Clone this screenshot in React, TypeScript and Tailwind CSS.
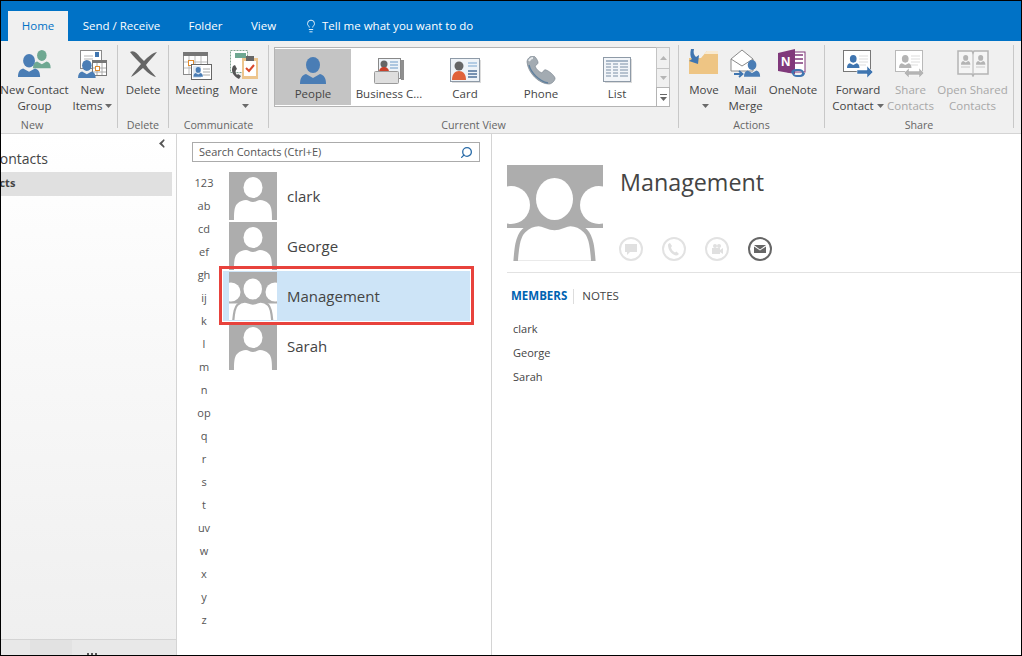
import React from "react";
import { Lightbulb, Search } from "lucide-react";

const Caret = ({ c = "#6a6a6a" }: { c?: string }) => (
  <svg width="7" height="4" viewBox="0 0 7 4" className="inline-block ml-[3px] mb-[2px]"><path d="M0 0h7L3.5 4z" fill={c} /></svg>
);

const Person = ({ c = "#4a7db5", x = 0, y = 0, s = 1 }: { c?: string; x?: number; y?: number; s?: number }) => (
  <g transform={`translate(${x} ${y}) scale(${s})`} fill={c}>
    <ellipse cx="13" cy="8" rx="7" ry="8" />
    <path d="M0 27c0-6 2-9 6-10l7 4 7-4c4 1 6 4 6 10z" />
  </g>
);

const Box = ({ w, h, children }: { w: number; h: number; children: React.ReactNode }) => (
  <svg width={w} height={h} viewBox={`0 0 ${w} ${h}`} className="block">{children}</svg>
);

const IconGroup = () => (
  <Box w={33} h={27}>
    <Person c="#6fa892" x={15} y={0} s={0.68} />
    <Person c="#4a7db5" x={0} y={4} s={0.85} />
  </Box>
);
const IconNewItems = () => (
  <Box w={30} h={29}>
    <rect x="2.5" y="1.5" width="21" height="18" fill="#fff" stroke="#8a8a8a" />
    <rect x="17" y="3" width="4" height="5" fill="#3f75b0" />
    <path d="M6 7h9M6 10h9" stroke="#b5b5b5" />
    <rect x="14.5" y="12.5" width="14" height="14" fill="#fff" stroke="#777" />
    <rect x="14" y="11" width="15" height="3" fill="#777" />
    <path d="M19 14v12M24 14v12M15 19h13M15 23h13" stroke="#aaa" />
    <rect x="17.5" y="17.5" width="4" height="4" fill="#fff" stroke="#e08a2c" />
    <Person x={0} y={11} s={0.68} />
  </Box>
);
const IconX = () => (
  <Box w={30} h={27}>
    <path d="M2 2c4-2 7 1 10 5l4 4c4-4 8-8 13-9-3 4-8 9-11 13 2 4 7 8 10 12-5-1-10-6-13-9-4 3-8 7-12 9 2-4 6-8 10-13C9 10 5 6 2 2z" fill="#666" />
  </Box>
);
const IconMeeting = () => (
  <Box w={30} h={29}>
    <rect x="1.5" y="1.5" width="24" height="22" fill="#fff" stroke="#8a8a8a" />
    <rect x="1" y="1" width="25" height="4" fill="#777" />
    <path d="M7 5v18M13 5v18M19 5v18M2 11h23M2 17h23" stroke="#bbb" />
    <rect x="6.5" y="9.5" width="5" height="5" fill="#fff" stroke="#e08a2c" />
    <rect x="9.5" y="13.5" width="20" height="15" fill="#fff" stroke="#666" />
    <rect x="11" y="15" width="8" height="12" fill="#dfe8f2" />
    <Person x={11.5} y={16} s={0.36} />
    <path d="M21 18h7M21 21h7M21 24h7" stroke="#aaa" />
  </Box>
);
const IconMore = () => (
  <Box w={30} h={31}>
    <rect x="1.5" y="1.5" width="17" height="22" fill="#fff" stroke="#7fa591" strokeDasharray="2 1" />
    <rect x="6" y="4" width="11" height="5" fill="#6fa892" />
    <rect x="13" y="9" width="16" height="21" fill="#edc58d" />
    <rect x="15" y="12" width="12" height="15" fill="#fff" />
    <rect x="17" y="7" width="8" height="5" fill="#666" />
    <path d="M17 19l3 3 5-6" stroke="#d9482b" strokeWidth="2" fill="none" />
    <path d="M4 17c-3 5 1 11 6 13l2-3-3-2-1 1c-1-1-2-3-1-5l1-1-2-4z" fill="#555" />
  </Box>
);
const IconPeople = () => (
  <Box w={26} h={27}><Person /></Box>
);
const IconBizCard = () => (
  <Box w={31} h={28}>
    <rect x="27" y="3" width="3" height="20" fill="#8f8f8f" />
    <rect x="4.500" y="1.500" width="22" height="20" fill="#eef3f8" stroke="#888" />
    <circle cx="10" cy="7" r="3.5" fill="#666" />
    <path d="M5 15c0-3 2-5 5-5s5 2 5 5z" fill="#c9412b" />
    <path d="M16 5h8M16 8h8M16 11h8" stroke="#6d9ac8" />
    <rect x=".5" y="14.500" width="24" height="12" rx="1" fill="#dedede" stroke="#9a9a9a" />
  </Box>
);
const IconCard = () => (
  <Box w={31} h={25}>
    <rect x="2" y="2" width="29" height="23" fill="#dcdcdc" />
    <rect x=".5" y=".5" width="29" height="23" fill="#eef3f8" stroke="#8e9aa7" />
    <circle cx="9" cy="8" r="4.500" fill="#666" />
    <path d="M2 22c0-6 3-9 7-9s7 3 7 9z" fill="#e0623a" />
    <path d="M18 5h9M18 8h9" stroke="#79a5d0" />
    <path d="M18 13h9M18 16h9M18 19h9" stroke="#4f7299" strokeWidth="1.4" />
  </Box>
);
const IconPhone = () => (
  <Box w={30} h={29}>
    <path d="M1 6c0-3 3-6 6-6 2 0 4 3 5 6 .5 2-2 3-3 4 1 3 4 6 7 7 1-1 2-4 4-3 3 1 8 5 9 8 .5 2-3 6-6 6C13 28 2 17 1 6z" fill="#a3abb2" stroke="#7d8791" strokeWidth=".7" />
    <path d="M3 5c1-2 2-3 4-3" stroke="#e4e8eb" strokeWidth="2" fill="none" />
    <path d="M3 9c2 8 10 16 19 18" stroke="#5e7f9e" strokeWidth="1.3" fill="none" />
  </Box>
);
const IconList = () => (
  <Box w={29} h={26}>
    <rect x="2" y="2" width="27" height="24" fill="#dcdcdc" />
    <rect x=".5" y=".5" width="27" height="24" fill="#f2f5f9" stroke="#8e9aa7" />
    <path d="M3 4h22" stroke="#5d7896" />
    {[7, 10, 13, 16, 19].map((y) => (
      <path key={y} d="M3 0h5M10 0h5M17 0h8" transform={`translate(0 ${y})`} stroke="#7a8fa6" />
    ))}
  </Box>
);
const IconMove = () => (
  <Box w={30} h={26}>
    <path d="M0 9h12l6-7h11v23H0z" fill="#eec584" />
    <path d="M18 2h11v3H15z" fill="#f8ead2" />
    <path d="M2 0h3c-1 4 0 6 2 8l3-2-1 9-9-3 3-2C1 8 1 4 2 0z" fill="#3f75b0" />
  </Box>
);
const IconMail = () => (
  <Box w={31} h={30}>
    <path d="M1 10L12 1l11 9v12H1z" fill="#fff" stroke="#8a8a8a" />
    <path d="M1 10l11 7 11-7" fill="none" stroke="#8a8a8a" />
    <Person x={14} y={11} s={0.62} />
    <path d="M4 25h8M9 22l3.500 3-3.500 3" stroke="#3f75b0" strokeWidth="1.800" fill="none" />
  </Box>
);
const IconOneNote = () => (
  <Box w={31} h={30}>
    <rect x="10" y="3" width="17" height="20" fill="#fff" stroke="#80397b" />
    <path d="M17 6h8M17 10h8M17 14h8" stroke="#80397b" strokeWidth="1.6" />
    <path d="M0 4l17-4v25L0 22z" fill="#80397b" />
    <text x="3" y="17" fill="#fff" fontSize="13" fontWeight="700" fontFamily="Liberation Sans">N</text>
    <path d="M14 24a4 3 0 0 1 4-3h3a4 3 0 0 1 0 6h-1M26 24a4 3 0 0 1-4 3h-3a4 3 0 0 1 0-6h1" stroke="#3f75b0" strokeWidth="2" fill="none" />
  </Box>
);
const CardBase = ({ c, p, children }: { c: string; p: string; children?: React.ReactNode }) => (
  <Box w={31} h={28}>
    <rect x=".5" y=".5" width="27" height="21" fill="#fff" stroke={c} />
    <Person c={p} x={4} y={5} s={0.48} />
    <path d="M16 6h9M16 9h9M16 12h9M16 15h7" stroke={c === "#666" ? "#aaa" : "#ddd"} />
    {children}
  </Box>
);
const IconForward = () => (
  <CardBase c="#777" p="#3f75b0">
    <path d="M14 20h10v-4l6 6-6 6v-4H14z" fill="#3f75b0" stroke="#fff" strokeWidth=".5" />
  </CardBase>
);
const IconShare = () => (
  <CardBase c="#b9b9b9" p="#b4b4b4">
    <path d="M9 23l5-5v3h10v-3l5 5-5 5v-3H14v3z" fill="#b4b4b4" stroke="#fff" strokeWidth=".5" />
  </CardBase>
);
const IconBook = () => (
  <Box w={32} h={27}>
    <path d="M1 1h14l1 2 1-2h14v23H17l-1 2-1-2H1z" fill="#f5f5f5" stroke="#b4b4b4" strokeWidth="1.5" />
    <path d="M16 3v22" stroke="#b4b4b4" />
    <Person c="#b4b4b4" x={4} y={5} s={0.36} />
    <Person c="#b4b4b4" x={19} y={5} s={0.36} />
    <path d="M4 17h9M19 17h9" stroke="#c8c8c8" />
  </Box>
);

const Btn = ({ w, icon, l1, l2, caret, dim, iconTop = 0 }: { w: string; icon: React.ReactNode; l1: string; l2?: string; caret?: boolean; dim?: boolean; iconTop?: number }) => (
  <div className={`${w} shrink-0 flex flex-col items-center pt-[8px] ${dim ? "text-[#a8a8a8]" : "text-[#444]"}`}>
    <div className="h-[33px] flex items-start justify-center" style={{ paddingTop: iconTop }}>{icon}</div>
    <div className="text-[11.5px] leading-[16px] whitespace-nowrap text-center">{l1}</div>
    {(l2 || caret) && (
      <div className="text-[11.5px] leading-[16px] whitespace-nowrap text-center">
        {l2}
        {caret && <Caret />}
      </div>
    )}
  </div>
);

const Group = ({ w, label, labelCls = "", children }: { w: string; label: string; labelCls?: string; children: React.ReactNode }) => (
  <div className={`${w} shrink-0 flex`}>
    <div className="flex-1 min-w-0 flex flex-col">
      <div className="flex-1 flex min-h-0">{children}</div>
      <div className={`h-[16px] text-[10.7px] leading-[16px] text-center text-[#666] whitespace-nowrap ${labelCls}`}>{label}</div>
    </div>
    <div className="w-px mt-[4px] mb-[5px] bg-[#c8c8c8]" />
  </div>
);

const Cell = ({ icon, label, on, top = 0 }: { icon: React.ReactNode; label: string; on?: boolean; top?: number }) => (
  <div className={`w-[76px] h-[56px] shrink-0 flex flex-col items-center ${on ? "bg-[#c4c4c4]" : ""}`}>
    <div className="h-[37px] flex items-center justify-center" style={{ paddingTop: top }}>{icon}</div>
    <div className="text-[11.5px] leading-[16px] text-[#444] whitespace-nowrap">{label}</div>
  </div>
);

const Scroll = ({ d, cls }: { d: string; cls: string }) => (
  <div className={`${cls} border border-[#c4c4c4] flex items-center justify-center`}>
    <svg width="7" height="8" viewBox="0 0 7 8"><path d={d} fill="#b5b5b5" /></svg>
  </div>
);

const Avatar = ({ size }: { size: string }) => (
  <svg viewBox="0 0 48 48" className={`${size} block shrink-0`}>
    <rect width="48" height="48" fill="#adadad" />
    <ellipse cx="24" cy="15.5" rx="9.5" ry="10.5" fill="#fff" />
    <path d="M5 48c0-6 0-13 3-16 3-3 6-4 9-4 2 0 4 2 7 2s5-2 7-2c3 0 6 1 9 4 3 3 3 10 3 16z" fill="#fff" />
  </svg>
);

const GroupAvatar = ({ size }: { size: string }) => (
  <svg viewBox="0 0 96 96" className={`${size} block shrink-0`}>
    <rect width="96" height="96" fill="#adadad" />
    <circle cx="4" cy="40" r="19" fill="#fff" />
    <circle cx="92" cy="40" r="19" fill="#fff" />
    <ellipse cx="47.5" cy="34" rx="18.5" ry="21" fill="#fff" />
    <rect x="0" y="63" width="30" height="33" fill="#fff" />
    <rect x="66" y="63" width="30" height="33" fill="#fff" />
    <path d="M8.500 98c1-14 2-26 8-32 5-5 10-7 15-7 6 0 9 4 16 4s10-4 16-4c5 0 10 2 15 7 6 6 7 18 8 32z" fill="#fff" stroke="#adadad" strokeWidth="4.500" />
  </svg>
);

const Contact = ({ name, group, sel }: { name: string; group?: boolean; sel?: boolean }) => (
  <div className={`h-[50px] flex items-center pl-[6px] ${sel ? "bg-[#cde4f7]" : ""}`}>
    {group ? <GroupAvatar size="w-[48px] h-[48px]" /> : <Avatar size="w-[48px] h-[48px]" />}
    <span className="ml-[10px] text-[15px] text-[#444]">{name}</span>
  </div>
);

const Round = ({ on, children }: { on?: boolean; children: React.ReactNode }) => (
  <div className={`w-[24px] h-[24px] rounded-full border-2 flex items-center justify-center ${on ? "border-[#666]" : "border-[#e2e2e2]"}`}>
    <svg width="14" height="14" viewBox="0 0 14 14" fill={on ? "#666" : "#e0e0e0"}>{children}</svg>
  </div>
);

export default function App() {
  const letters = ["123", "ab", "cd", "ef", "gh", "ij", "k", "l", "m", "n", "op", "q", "r", "s", "t", "uv", "w", "x", "y", "z"];
  return (
    <div className="w-[1022px] h-[656px] border border-black bg-white flex flex-col overflow-hidden font-['Open_Sans',sans-serif]">
      <div className="h-[40px] shrink-0 bg-[#0072c6] flex items-end text-white text-[11.5px]">
        <div className="w-[60px] h-[30px] ml-[7px] bg-[#f0f0f0] text-[#0072c6] flex items-center justify-center">Home</div>
        <div className="w-[107px] h-[30px] flex items-center justify-center">Send / Receive</div>
        <div className="w-[61px] h-[30px] flex items-center justify-center">Folder</div>
        <div className="w-[55px] h-[30px] flex items-center justify-center">View</div>
        <div className="h-[30px] ml-[13px] flex items-center">
          <Lightbulb size={14} strokeWidth={1.5} />
          <span className="ml-[4px]">Tell me what you want to do</span>
        </div>
      </div>

      <div className="h-[93px] shrink-0 bg-[#f0f0f0] border-b border-[#d4d4d4] flex">
        <Group w="w-[117px]" label="New" labelCls="pr-[54px]">
          <Btn w="w-[67px]" icon={<IconGroup />} l1="New Contact" l2="Group" iconTop={1} />
          <Btn w="w-[49px]" icon={<IconNewItems />} l1="New" l2="Items" caret />
        </Group>
        <Group w="w-[51px]" label="Delete">
          <Btn w="w-[50px]" icon={<IconX />} l1="Delete" iconTop={1} />
        </Group>
        <Group w="w-[100px]" label="Communicate">
          <Btn w="w-[56px]" icon={<IconMeeting />} l1="Meeting" iconTop={2} />
          <Btn w="w-[37px]" icon={<IconMore />} l1="More" caret />
        </Group>
        <Group w="w-[410px]" label="Current View">
          <div className="ml-[5px] mt-[6px] w-[396px] h-[60px] border border-[#b4b4b4] bg-white flex relative">
            <div className="flex h-[56px] mt-px">
              <Cell on icon={<IconPeople />} label="People" top={6} />
              <Cell icon={<IconBizCard />} label="Business C..." top={6} />
              <Cell icon={<IconCard />} label="Card" top={5} />
              <Cell icon={<IconPhone />} label="Phone" top={6} />
              <Cell icon={<IconList />} label="List" top={5} />
            </div>
            <div className="ml-auto w-[14px] flex flex-col -my-px -mr-px">
              <Scroll cls="h-[22px] bg-[#f0f0f0]" d="M3.500 2L7 6H0z" />
              <Scroll cls="h-[20px] -mt-px bg-[#f0f0f0]" d="M3.500 6L7 2H0z" />
              <div className="h-[20px] -mt-px border border-[#b4b4b4] bg-white flex items-center justify-center">
                <svg width="7" height="8" viewBox="0 0 7 8"><path d="M0 1h7v1H0zM0 4h7L3.500 8z" fill="#666" /></svg>
              </div>
            </div>
          </div>
        </Group>
        <Group w="w-[146px]" label="Actions">
          <div className="w-[4px]" />
          <Btn w="w-[42px]" icon={<IconMove />} l1="Move" caret />
          <Btn w="w-[41px]" icon={<IconMail />} l1="Mail" l2="Merge" />
          <Btn w="w-[54px]" icon={<IconOneNote />} l1="OneNote" />
        </Group>
        <Group w="w-[189px]" label="Share">
          <div className="w-[3px]" />
          <Btn w="w-[60px]" icon={<IconForward />} l1="Forward" l2="Contact" caret iconTop={1} />
          <Btn w="w-[45px]" icon={<IconShare />} l1="Share" l2="Contacts" dim iconTop={1} />
          <div className="w-[2px]" />
          <Btn w="w-[75px]" icon={<IconBook />} l1="Open Shared" l2="Contacts" dim iconTop={1} />
        </Group>
      </div>

      <div className="flex-1 min-h-0 flex">
        <div className="w-[176px] shrink-0 border-r border-[#d4d4d4] bg-linear-to-b from-white to-[#efefef] flex flex-col relative overflow-hidden">
          <svg width="6" height="9" viewBox="0 0 6 9" className="absolute left-[158px] top-[5px]"><path d="M5 0L0 4.500 5 9l.6-1.600L3 4.500l2.600-3z" fill="#555" /></svg>
          <div className="pt-[15px] h-[38px] text-[14px] leading-[20px] text-[#444] ml-[-10px] whitespace-nowrap">Contacts</div>
          <div className="w-[171px] h-[24px] bg-[#e0e0e0] overflow-hidden flex items-center pb-[2px]">
            <span className="ml-[-34px] text-[11px] font-bold text-[#444] whitespace-nowrap">Contacts</span>
          </div>
          <div className="flex-1" />
          <div className="h-[16px] border-t border-[#d4d4d4] bg-[#e8e8e8] flex relative overflow-hidden">
            <div className="ml-[29px] w-[42px] bg-[#e2e2e2]" />
            <div className="absolute left-[86px] top-[13px] flex gap-[2px]">
              <i className="block w-[2px] h-[2px] bg-[#555]" />
              <i className="block w-[2px] h-[2px] bg-[#555]" />
              <i className="block w-[2px] h-[2px] bg-[#555]" />
            </div>
          </div>
        </div>

        <div className="w-[315px] shrink-0 border-r border-[#d4d4d4] h-full relative">
          <div className="ml-[15px] mt-[8px] w-[288px] h-[20px] border border-[#ababab] flex items-center px-[6px] justify-between">
            <span className="text-[11px] text-[#555]">Search Contacts (Ctrl+E)</span>
            <Search size={13} strokeWidth={2.4} className="text-[#2a6ca8] -scale-x-100" />
          </div>
          <div className="flex mt-[9px]">
            <div className="ml-[15px] w-[24px] flex flex-col items-center">
              {letters.map((l) => (
                <div key={l} className="h-[23px] leading-[23px] text-[11px] text-[#555]">{l}</div>
              ))}
            </div>
            <div className="ml-[7px] w-[247px]">
              <Contact name="clark" />
              <Contact name="George" />
              <Contact name="Management" group sel />
              <Contact name="Sarah" />
            </div>
          </div>
          <div className="absolute left-[42px] top-[132px] w-[255px] h-[59px] border-[3px] border-[#e8423c]" />
        </div>

        <div className="flex-1 min-w-0 pl-[15px] pt-[31px]">
          <div className="flex h-[96px]">
            <GroupAvatar size="w-[96px] h-[96px]" />
            <div className="ml-[17px] flex flex-col">
              <div className="text-[23.3px] leading-[34px] text-[#444]">Management</div>
              <div className="mt-auto flex gap-[19px] ml-[-1px]">
                <Round><path d="M1 2h12v8H6l-3 3v-3H1z" /></Round>
                <Round><path d="M3 1l2 3-1 1.500c.5 2 2 4 4 5l1.500-1 2.500 2.500c-1 1-2 1.500-3 1.500C5 13 1 8 1 3c0-1 1-2 2-2z" /></Round>
                <Round><circle cx="5" cy="4" r="2" /><circle cx="9" cy="4" r="2" /><path d="M2 6h8v2l3-2v6l-3-2v2H2z" /></Round>
                <Round on><path d="M1 3h12L7 7.500zM1 4.500l6 4 6-4V11H1z" /></Round>
              </div>
            </div>
          </div>
          <div className="h-px bg-[#e2e2e2] mt-[11px]" />
          <div className="flex items-center mt-[15px] text-[11.5px] h-[16px] ml-[4px]">
            <span className="font-bold text-[#0063b1]">MEMBERS</span>
            <span className="w-px h-[15px] bg-[#ddd] ml-[6px] mr-[8px]" />
            <span className="text-[#444]">NOTES</span>
          </div>
          <div className="mt-[13px] ml-[6px] text-[11px] text-[#444]">
            <div className="h-[24px] leading-[24px]">clark</div>
            <div className="h-[24px] leading-[24px]">George</div>
            <div className="h-[24px] leading-[24px]">Sarah</div>
          </div>
        </div>
      </div>
    </div>
  );
}
